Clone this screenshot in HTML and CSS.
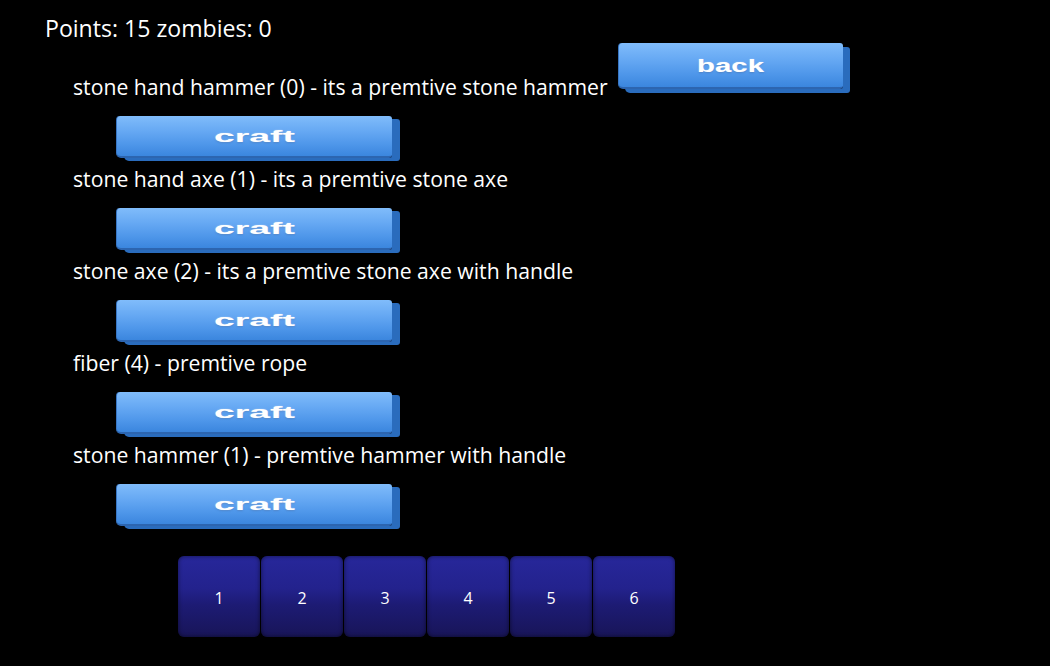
FILE: index.html
```html
<!DOCTYPE html>
<html>
<head>
<meta charset="utf-8">
<link rel="stylesheet" href="styles.css">
</head>
<body>
<div class="page">
  <div class="score">Points: 15 zombies: 0</div>
  <div class="list">
    <div class="first-row">
      <div class="item-text">stone hand hammer (0) - its a premtive stone hammer</div>
      <div class="btn back"><span class="label back-label">back</span></div>
    </div>
    <div class="btn craft"><span class="label">craft</span></div>
    <div class="item-text">stone hand axe (1) - its a premtive stone axe</div>
    <div class="btn craft"><span class="label">craft</span></div>
    <div class="item-text">stone axe (2) - its a premtive stone axe with handle</div>
    <div class="btn craft"><span class="label">craft</span></div>
    <div class="item-text">fiber (4) - premtive rope</div>
    <div class="btn craft"><span class="label">craft</span></div>
    <div class="item-text">stone hammer (1) - premtive hammer with handle</div>
    <div class="btn craft"><span class="label">craft</span></div>
  </div>
  <div class="pager">
    <div class="tile">1</div>
    <div class="tile">2</div>
    <div class="tile">3</div>
    <div class="tile">4</div>
    <div class="tile">5</div>
    <div class="tile">6</div>
  </div>
</div>
</body>
</html>
```
FILE: styles.css
```css
html, body {
  margin: 0;
  padding: 0;
  background: #000;
}
body {
  width: 1050px;
  height: 666px;
  overflow: hidden;
  font-family: "Open Sans", "Noto Sans", sans-serif;
  color: #fff;
}
.page {
  display: flex;
  flex-direction: column;
  padding-top: 13px;
}
.score {
  padding-left: 45px;
  font-size: 23.1px;
  line-height: 30px;
}
.list {
  display: flex;
  flex-direction: column;
  align-items: flex-start;
  padding-left: 73px;
}
.first-row {
  display: flex;
  align-items: flex-end;
}
.item-text {
  font-size: 21.2px;
  line-height: 28px;
  white-space: nowrap;
}
.btn {
  display: flex;
  align-items: center;
  justify-content: center;
  box-sizing: border-box;
  border-radius: 4px 3px 3px 5px;
  background: linear-gradient(#80bcfb 0%, #68aaf4 35%, #4f97ea 70%, #3b86de 100%);
  border-left: 1px solid #3876c4;
  border-bottom: 2px solid #2c65b0;
}
.craft {
  width: 276px;
  height: 42px;
  margin: 15px 0 7px 43px;
  padding-top: 2px;
  box-shadow: 8px 3px 0 #2a6cbd;
}
.back {
  width: 225px;
  height: 46px;
  margin: 0 0 12px 10px;
  padding-top: 1px;
  box-shadow: 7px 4px 0 #2a6cbd;
}
.label {
  display: inline-block;
  font-family: "Liberation Sans", Arial, sans-serif;
  font-weight: bold;
  font-size: 17px;
  line-height: 20px;
  color: #fff;
  transform: scaleX(2.2);
  text-shadow: 0 0 1px rgba(255,255,255,0.6), 0 1px 1px rgba(40,90,160,0.5);
}
.back-label {
  font-size: 18px;
  transform: scaleX(1.63);
}
.pager {
  display: flex;
  gap: 1px;
  padding-left: 178px;
  margin-top: 23px;
}
.tile {
  width: 82px;
  height: 81px;
  box-sizing: border-box;
  border-radius: 6px;
  background: linear-gradient(#27279a 0%, #23228d 40%, #1d1b74 60%, #181558 100%);
  box-shadow: inset 0 0 4px rgba(0,0,0,0.55);
  display: flex;
  align-items: center;
  justify-content: center;
  padding-top: 2px;
  font-size: 16px;
  color: #fff;
}
```
